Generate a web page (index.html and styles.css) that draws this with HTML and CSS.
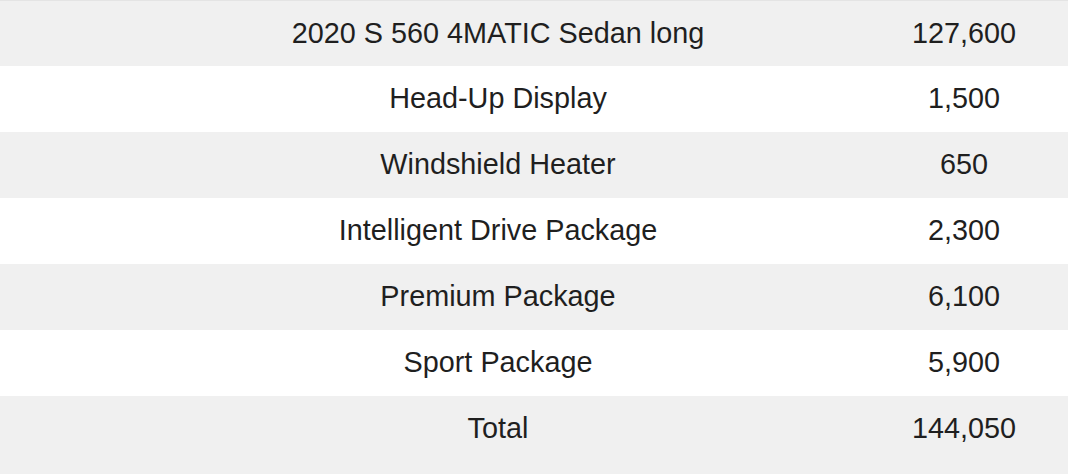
FILE: index.html
```html
<!DOCTYPE html>
<html lang="en">
<head>
<meta charset="utf-8">
<title>Price table</title>
<link rel="stylesheet" href="styles.css">
</head>
<body>
<div class="price-table">
  <div class="row odd"><div class="cell item">2020 S 560 4MATIC Sedan long</div><div class="cell price">127,600</div></div>
  <div class="row"><div class="cell item">Head-Up Display</div><div class="cell price">1,500</div></div>
  <div class="row odd"><div class="cell item">Windshield Heater</div><div class="cell price">650</div></div>
  <div class="row"><div class="cell item">Intelligent Drive Package</div><div class="cell price">2,300</div></div>
  <div class="row odd"><div class="cell item">Premium Package</div><div class="cell price">6,100</div></div>
  <div class="row"><div class="cell item">Sport Package</div><div class="cell price">5,900</div></div>
  <div class="row odd last"><div class="cell item">Total</div><div class="cell price">144,050</div></div>
</div>
</body>
</html>
```
FILE: styles.css
```css
html, body {
  margin: 0;
  padding: 0;
  background: #ffffff;
}
body {
  font-family: "Liberation Sans", Arial, sans-serif;
  font-size: 28.8px;
  color: #1f1f1f;
  overflow: hidden;
}
.price-table {
  display: flex;
  flex-direction: column;
  width: 1068px;
  height: 474px;
  border-top: 1px solid #e4e4e4;
  box-sizing: border-box;
}
.row {
  display: grid;
  grid-template-columns: 860px 208px;
  height: 66px;
  flex: 0 0 66px;
  background: #ffffff;
}
.row:first-child {
  height: 65px;
  flex-basis: 65px;
}
.row.odd {
  background: #f0f0f0;
}
.row.last {
  flex: 1 1 auto;
  align-items: start;
}
.cell {
  display: flex;
  align-items: center;
  justify-content: center;
  height: 66px;
  box-sizing: border-box;
  padding-bottom: 2px;
  white-space: nowrap;
}
.row:first-child .cell {
  height: 65px;
  padding-bottom: 1px;
}
.item {
  padding-left: 136px;
}
```
